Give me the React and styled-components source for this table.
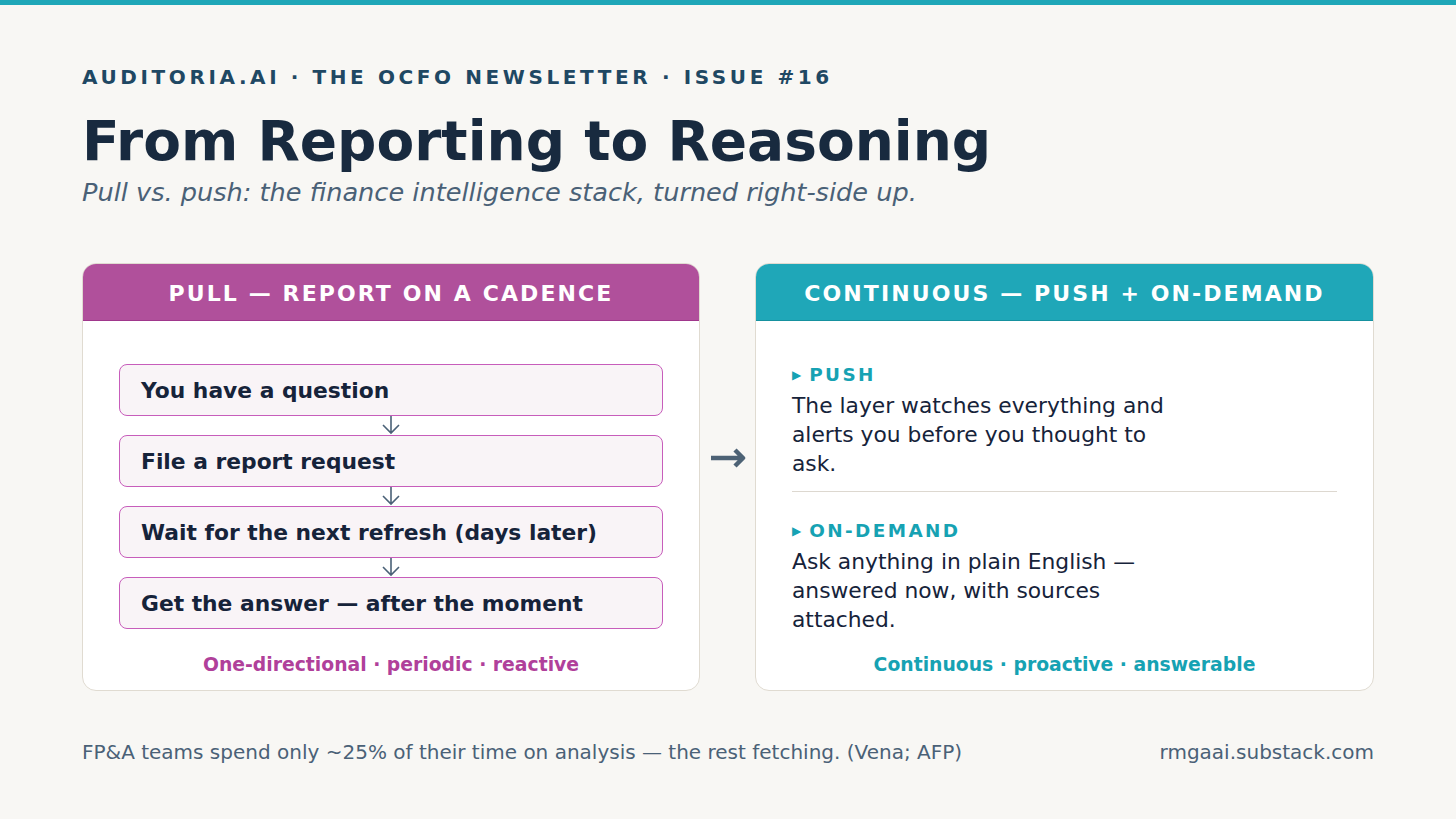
import React from 'react'
import styled, { createGlobalStyle } from 'styled-components'

const GlobalStyle = createGlobalStyle`
    html, body {
        margin: 0;
        padding: 0;
        background: #f8f7f4;
    }
    body {
        font-family: "DejaVu Sans", "Liberation Sans", sans-serif;
    }
`

const Page = styled.div`
    width: 1456px;
    height: 819px;
    box-sizing: border-box;
    border-top: 5px solid #1fa7b8;
    background: #f8f7f4;
    padding: 0 82px;
    display: flex;
    flex-direction: column;
`
const Eyebrow = styled.div`
    margin-top: 60px;
    font-size: 20px;
    line-height: 24px;
    font-weight: bold;
    letter-spacing: 3.6px;
    color: #1f4863;
`
const Title = styled.h1`
    margin: 21px 0 0;
    font-size: 55px;
    line-height: 62px;
    font-weight: bold;
    color: #182a3f;
`
const Subtitle = styled.p`
    margin: 5px 0 0;
    font-size: 25.6px;
    line-height: 30px;
    font-style: italic;
    color: #4a6177;
`
const Columns = styled.div`
    margin-top: 56px;
    display: grid;
    grid-template-columns: 618px 55px 619px;
    height: 428px;
`
const Card = styled.div`
    display: flex;
    flex-direction: column;
    background: #ffffff;
    border: 1px solid #e0dbd1;
    border-radius: 14px;
    overflow: hidden;
    box-sizing: border-box;
`
const CardHeader = styled.div`
    height: 57px;
    flex-shrink: 0;
    box-sizing: border-box;
    background: ${p => p.$color};
    border-bottom: 1px solid ${p => p.$edge};
    display: flex;
    align-items: center;
    justify-content: center;
    color: #ffffff;
    font-size: 22px;
    font-weight: bold;
    letter-spacing: 2.1px;
    padding-top: 2px;
`
const CardBody = styled.div`
    flex: 1;
    padding: ${p => p.$top}px 36px 0;
`
const Tagline = styled.div`
    padding-bottom: 14px;
    text-align: center;
    font-size: 18.8px;
    line-height: 22px;
    font-weight: bold;
    color: ${p => p.$color};
`
const Steps = styled.div`
    display: flex;
    flex-direction: column;
`
const Step = styled.div`
    height: 52px;
    box-sizing: border-box;
    display: flex;
    align-items: center;
    padding-left: 21px;
    background: #f9f4f7;
    border: 1px solid #c75dbb;
    border-radius: 8px;
    font-size: 21.8px;
    font-weight: bold;
    color: #16233a;
`
const Connector = styled.div`
    height: 19px;
    display: flex;
    justify-content: center;
`
const Middle = styled.div`
    display: flex;
    justify-content: center;
    padding-top: 184px;
`
const Label = styled.div`
    font-size: 18.4px;
    line-height: 22px;
    font-weight: bold;
    letter-spacing: 2.4px;
    color: #16a2b3;
    display: flex;
    align-items: center;
    gap: 8px;
`
const Marker = styled.span`
    font-size: 12px;
    letter-spacing: 0;
`
const Text = styled.p`
    margin: 5px 0 0;
    max-width: 390px;
    font-size: 21.8px;
    line-height: 29px;
    color: #16233a;
`
const Divider = styled.div`
    height: 1px;
    background: #ddd8d0;
    margin: 13px 0 28px;
`
const Footer = styled.div`
    margin-top: 49px;
    display: flex;
    justify-content: space-between;
    font-size: 20px;
    line-height: 24px;
    color: #4a6177;
`

const DownArrow = () => (
    <svg width="20" height="19" viewBox="0 0 20 19">
        <path d="M10 0 V17 M2 9 L10 17 L18 9" fill="none" stroke="#4a6177" strokeWidth="1.6" />
    </svg>
)

const RightArrow = () => (
    <svg width="36" height="22" viewBox="0 0 36 22">
        <path d="M1 11 H33 M25 3 L33 11 L25 19" fill="none" stroke="#4d6275" strokeWidth="4.5" strokeLinejoin="round" />
    </svg>
)

const steps = [
    'You have a question',
    'File a report request',
    'Wait for the next refresh (days later)',
    'Get the answer — after the moment',
]

export default function App() {
    return (
        <Page>
            <GlobalStyle />
            <Eyebrow>AUDITORIA.AI · THE OCFO NEWSLETTER · ISSUE #16</Eyebrow>
            <Title>From Reporting to Reasoning</Title>
            <Subtitle>Pull vs. push: the finance intelligence stack, turned right-side up.</Subtitle>
            <Columns>
                <Card>
                    <CardHeader $color="#b0509b" $edge="#a0378c">PULL — REPORT ON A CADENCE</CardHeader>
                    <CardBody $top={43}>
                        <Steps>
                            {steps.map((s, i) => (
                                <React.Fragment key={s}>
                                    {i > 0 && <Connector><DownArrow /></Connector>}
                                    <Step>{s}</Step>
                                </React.Fragment>
                            ))}
                        </Steps>
                    </CardBody>
                    <Tagline $color="#b0409a">One-directional · periodic · reactive</Tagline>
                </Card>
                <Middle>
                    <RightArrow />
                </Middle>
                <Card>
                    <CardHeader $color="#1fa7b8" $edge="#16919f">CONTINUOUS — PUSH + ON-DEMAND</CardHeader>
                    <CardBody $top={43}>
                        <Label><Marker>▶</Marker>PUSH</Label>
                        <Text>The layer watches everything and alerts you before you thought to ask.</Text>
                        <Divider />
                        <Label><Marker>▶</Marker>ON-DEMAND</Label>
                        <Text>Ask anything in plain English — answered now, with sources attached.</Text>
                    </CardBody>
                    <Tagline $color="#16a2b3">Continuous · proactive · answerable</Tagline>
                </Card>
            </Columns>
            <Footer>
                <span>FP&amp;A teams spend only ~25% of their time on analysis — the rest fetching. (Vena; AFP)</span>
                <span>rmgaai.substack.com</span>
            </Footer>
        </Page>
    )
}
